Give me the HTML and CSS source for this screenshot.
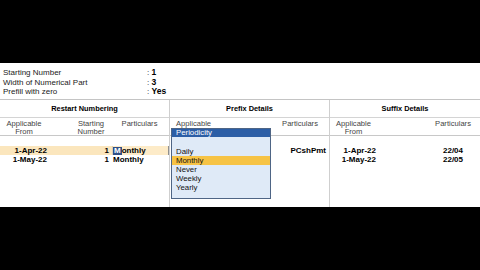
FILE: index.html
```html
<!DOCTYPE html>
<html lang="en">
<head>
  <meta charset="UTF-8">
  <title>Voucher Numbering</title>
  <link rel="stylesheet" href="styles.css">
</head>
<body>

<div class="screen">
  <div class="bar"></div>

  <div class="panel">
    <div class="info">
      <div class="info-row"><span class="label">Starting Number</span><span class="colon">:</span><span class="value">1</span></div>
      <div class="info-row"><span class="label">Width of Numerical Part</span><span class="colon">:</span><span class="value">3</span></div>
      <div class="info-row"><span class="label">Prefill with zero</span><span class="colon">:</span><span class="value">Yes</span></div>
    </div>

    <div class="sections">
      <section class="sec restart">
        <div class="sec-title">Restart Numbering</div>
        <div class="grid head">
          <div class="c-center">Applicable<br>From</div>
          <div></div>
          <div class="c-center">Starting<br>Number</div>
          <div class="c-center">Particulars</div>
        </div>
        <div class="data">
          <div class="grid row current">
            <div class="c-right">1-Apr-22</div>
            <div></div>
            <div class="c-right">1</div>
            <div class="field"><span class="cursor">M</span>onthly</div>
          </div>
          <div class="grid row">
            <div class="c-right">1-May-22</div>
            <div></div>
            <div class="c-right">1</div>
            <div class="plain">Monthly</div>
          </div>
        </div>
      </section>

      <section class="sec prefix">
        <div class="sec-title">Prefix Details</div>
        <div class="grid head">
          <div class="c-left">Applicable</div>
          <div class="c-center">Particulars</div>
        </div>
        <div class="data">
          <div class="grid row">
            <div></div>
            <div class="c-right">PCshPmt</div>
          </div>
        </div>

        <div class="dropdown">
          <div class="dd-title">Periodicity</div>
          <div class="dd-gap"></div>
          <div class="dd-item">Daily</div>
          <div class="dd-item selected">Monthly</div>
          <div class="dd-item">Never</div>
          <div class="dd-item">Weekly</div>
          <div class="dd-item">Yearly</div>
        </div>
      </section>

      <section class="sec suffix">
        <div class="sec-title">Suffix Details</div>
        <div class="grid head">
          <div class="c-center">Applicable<br>From</div>
          <div></div>
          <div class="c-center">Particulars</div>
        </div>
        <div class="data">
          <div class="grid row">
            <div class="c-right">1-Apr-22</div>
            <div></div>
            <div class="c-center">22/04</div>
          </div>
          <div class="grid row">
            <div class="c-right">1-May-22</div>
            <div></div>
            <div class="c-center">22/05</div>
          </div>
        </div>
      </section>
    </div>
  </div>

  <div class="bar"></div>
</div>

</body>
</html>
```

FILE: styles.css
```css
body {
  margin: 0;
  padding: 0;
  background: #000;
  font-family: 'Liberation Sans', Arial, sans-serif;
  color: #000;
}
.screen {
  width: 480px;
  height: 270px;
  display: flex;
  flex-direction: column;
}
.bar {
  height: 63px;
  background: #000;
}
.panel {
  height: 144px;
  background: #fff;
  display: flex;
  flex-direction: column;
}
.info {
  height: 37px;
  box-sizing: border-box;
  padding-top: 5px;
  border-bottom: 1px solid #c4c4c4;
  font-size: 8px;
}
.info-row {
  display: flex;
  height: 9.5px;
  line-height: 9.5px;
}
.label {
  width: 144px;
  padding-left: 3px;
  color: #222;
}
.colon {
  width: 4.5px;
  color: #222;
}
.value {
  font-weight: bold;
  font-size: 8.5px;
}
.sections {
  flex: 1;
  display: flex;
}
.sec {
  position: relative;
  box-sizing: border-box;
}
.restart {
  width: 170px;
  border-right: 1px solid #cfcfcf;
}
.prefix {
  width: 160px;
  border-right: 1px solid #cfcfcf;
}
.suffix {
  width: 150px;
}
.sec-title {
  height: 17px;
  line-height: 17px;
  text-align: center;
  font-weight: bold;
  font-size: 7.4px;
  border-bottom: 1px solid #d4d4d4;
}
.grid {
  display: grid;
}
.restart .grid {
  grid-template-columns: 48px 24px 38px 1fr;
}
.prefix .grid {
  grid-template-columns: 1fr 58px;
}
.suffix .grid {
  grid-template-columns: 47px 1fr 54px;
}
.head {
  height: 18px;
  box-sizing: border-box;
  padding-top: 1.5px;
  font-size: 7.6px;
  line-height: 8.4px;
  color: #444;
  border-bottom: 1px solid #c8c8c8;
}
.c-center {
  text-align: center;
}
.c-right {
  text-align: right;
  padding-right: 1px;
}
.c-left {
  padding-left: 6px;
}
.prefix .row .c-right {
  padding-right: 3px;
}
.data {
  padding-top: 10px;
}
.row {
  height: 9px;
  line-height: 9px;
  font-size: 8px;
  font-weight: bold;
}
.current {
  background: #fbe6bd;
}
.field {
  margin-left: 2px;
  background: #fdebc8;
  border-left: 1px solid #d9cdb6;
  border-right: 1px solid #8f8f8f;
}
.plain {
  padding-left: 3px;
}
.cursor {
  display: inline-block;
  background: #2f4f86;
  color: #fff;
  padding: 0 1px;
  line-height: 8px;
}
.dropdown {
  position: absolute;
  top: 28px;
  left: 1px;
  width: 100px;
  height: 71px;
  box-sizing: border-box;
  background: #dfeaf7;
  border: 1px solid #4e6585;
  font-size: 7.8px;
}
.dd-title {
  height: 8px;
  line-height: 8px;
  background: #2c5ea6;
  color: #fff;
  padding-left: 4px;
}
.dd-gap {
  height: 9.5px;
}
.dd-item {
  height: 9px;
  line-height: 9px;
  padding-left: 4px;
  color: #111;
}
.dd-item.selected {
  background: #f6c345;
}
```
